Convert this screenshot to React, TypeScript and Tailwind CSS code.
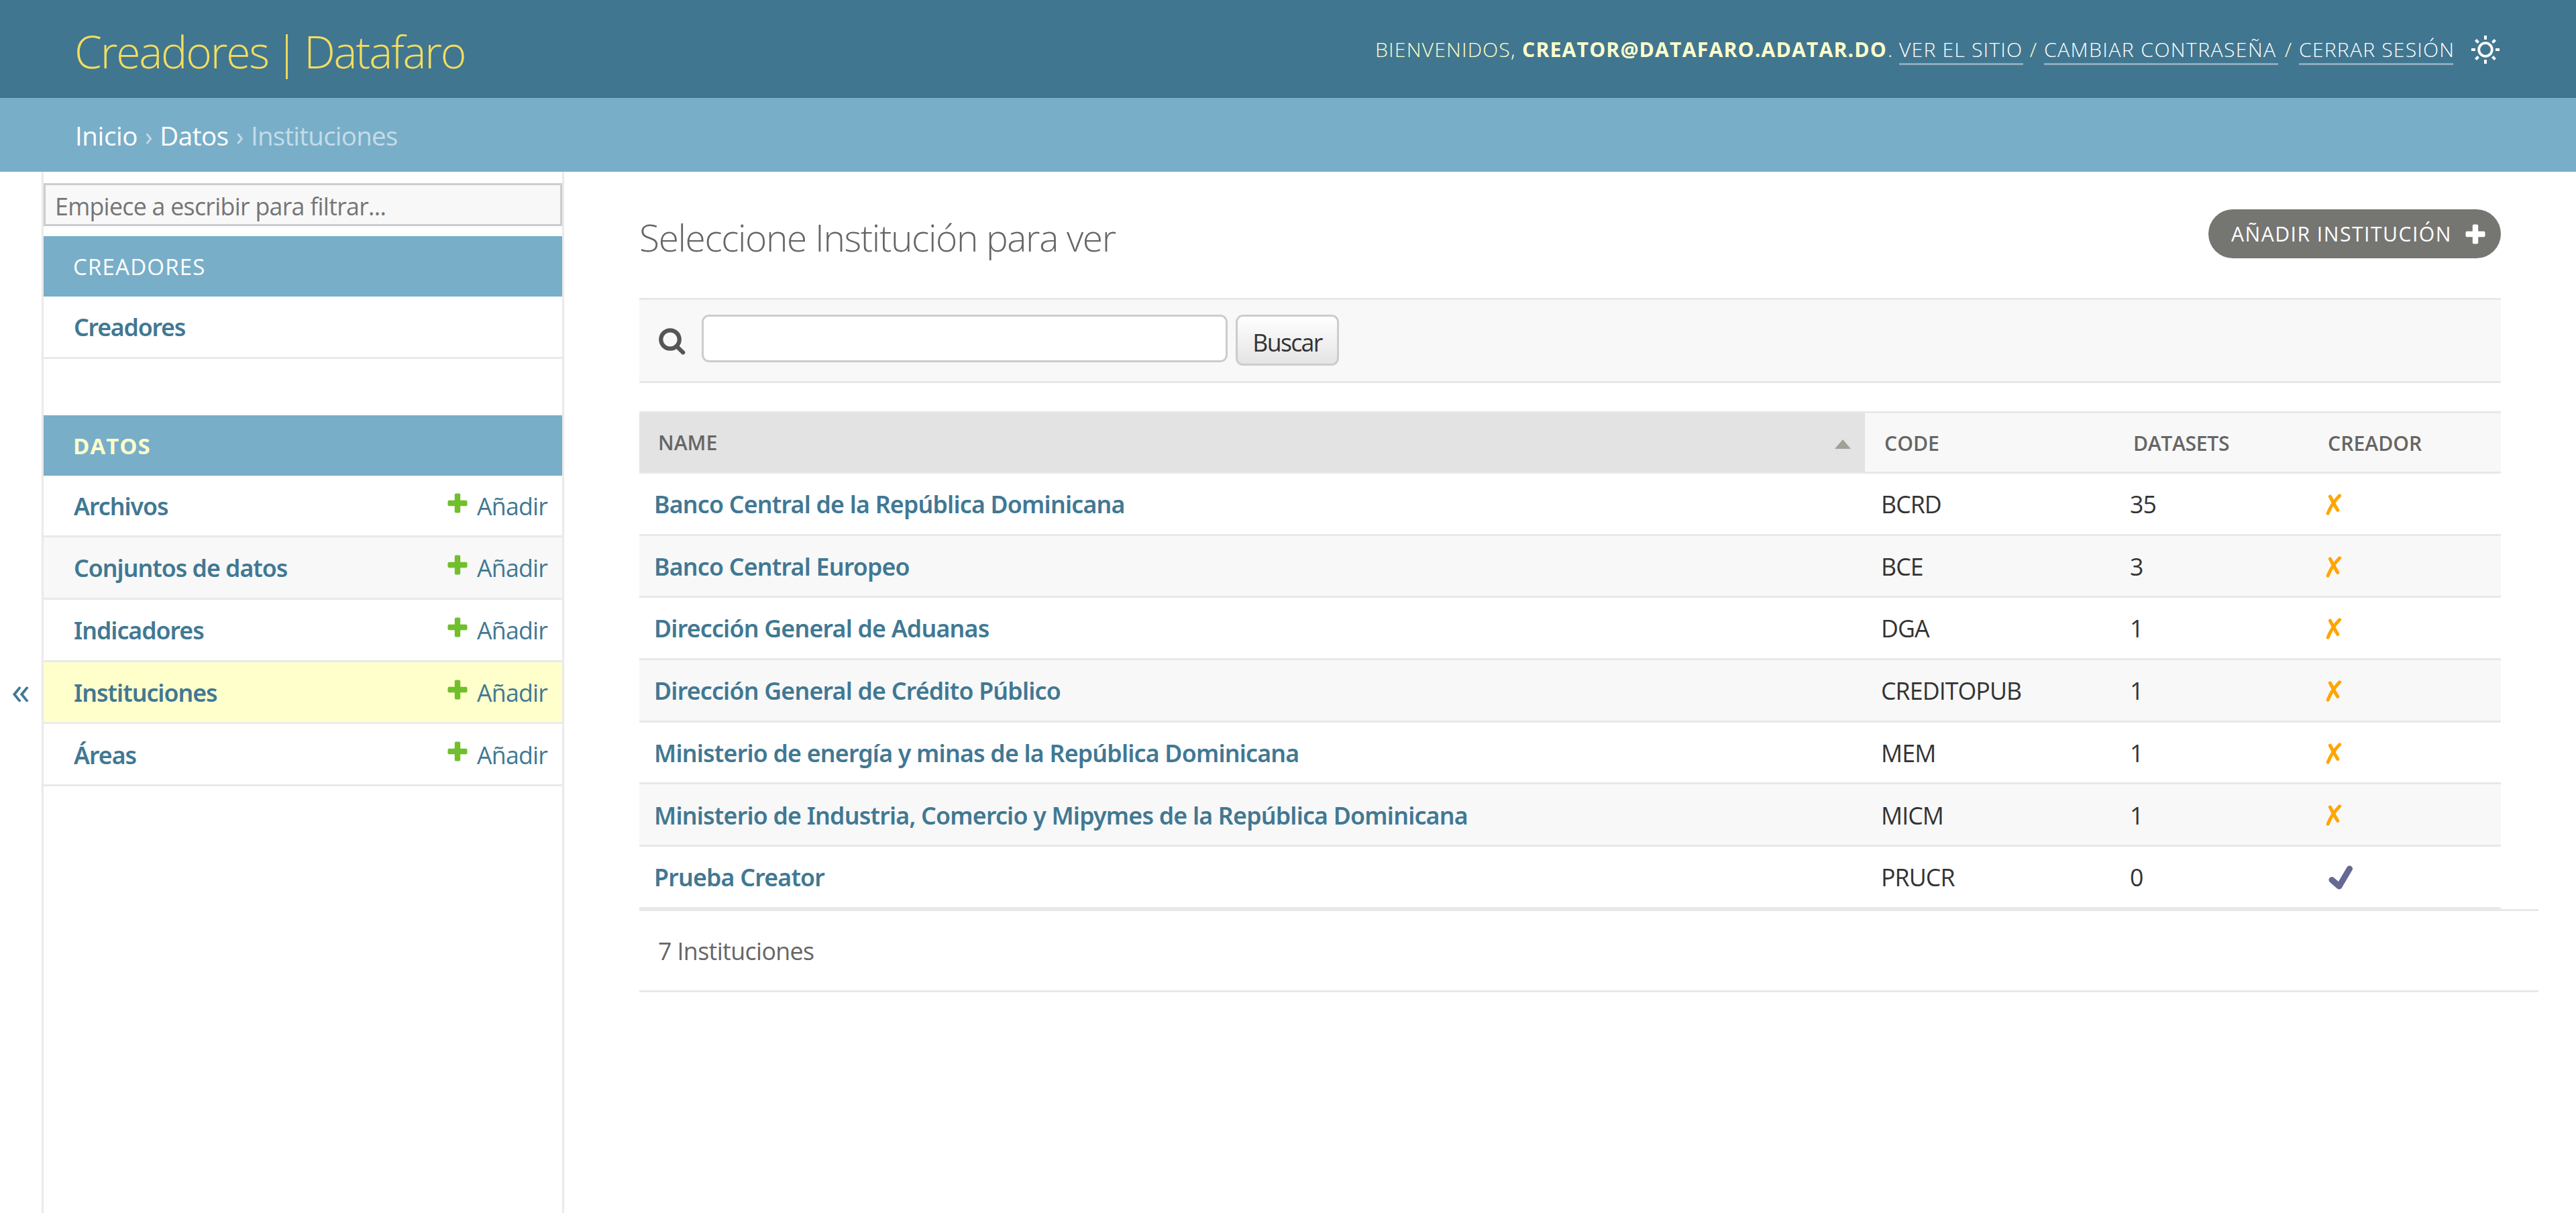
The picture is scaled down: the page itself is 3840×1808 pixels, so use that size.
type Model = { name: string; current?: boolean };

type Institution = {
  name: string;
  code: string;
  datasets: number;
  creator: boolean;
};

const models: Model[] = [
  { name: "Archivos" },
  { name: "Conjuntos de datos" },
  { name: "Indicadores" },
  { name: "Instituciones", current: true },
  { name: "Áreas" },
];

const institutions: Institution[] = [
  { name: "Banco Central de la República Dominicana", code: "BCRD", datasets: 35, creator: false },
  { name: "Banco Central Europeo", code: "BCE", datasets: 3, creator: false },
  { name: "Dirección General de Aduanas", code: "DGA", datasets: 1, creator: false },
  { name: "Dirección General de Crédito Público", code: "CREDITOPUB", datasets: 1, creator: false },
  { name: "Ministerio de energía y minas de la República Dominicana", code: "MEM", datasets: 1, creator: false },
  { name: "Ministerio de Industria, Comercio y Mipymes de la República Dominicana", code: "MICM", datasets: 1, creator: false },
  { name: "Prueba Creator", code: "PRUCR", datasets: 0, creator: true },
];

function SunIcon() {
  return (
    <svg viewBox="-21 -21 42 42" className="ml-[27px] size-[42px] shrink-0" fill="none" stroke="#fff">
      <circle r="9.8" strokeWidth="3.8" />
      {[0, 45, 90, 135, 180, 225, 270, 315].map((angle) => (
        <path key={angle} d={angle % 90 === 0 ? "M0 -21V-15" : "M0 -20.5V-14.8"} strokeWidth="4" transform={`rotate(${angle})`} />
      ))}
    </svg>
  );
}

function PlusIcon({ className }: { className: string }) {
  return (
    <svg viewBox="0 0 30 30" className={className} fill="currentColor">
      <rect x="10.8" y="0.5" width="8.4" height="29" rx="2" />
      <rect x="0.5" y="10.8" width="29" height="8.4" rx="2" />
    </svg>
  );
}

function SearchIcon() {
  return (
    <svg viewBox="0 0 40 40" className="mt-[42px] size-10 shrink-0" fill="none" stroke="#555">
      <circle cx="17" cy="17" r="13.7" strokeWidth="6.2" />
      <path d="M27 27.5L36.3 36.5" strokeWidth="6" strokeLinecap="round" />
    </svg>
  );
}

function NoIcon() {
  return (
    <svg viewBox="0 0 24 32" className="-ml-[3px] h-8 w-6" fill="none" stroke="#ffa500" strokeWidth="5" strokeLinecap="round">
      <path d="M20.6 2.8C14 9.5 7 19 3.2 29.2" />
      <path d="M6.4 4C10 11 14 18.5 17.8 24.4" />
    </svg>
  );
}

function YesIcon() {
  return (
    <svg viewBox="0 0 36 36" className="ml-px size-9" fill="none" stroke="#666993" strokeLinecap="round" strokeLinejoin="round">
      <path d="M5 21.5L16 31L31.5 4.8" strokeWidth="9" />
    </svg>
  );
}

function Header() {
  return (
    <header className="flex h-[146px] items-center justify-between bg-[#417690] pl-[111px] pr-[114px]">
      <h1 className="pt-1.5 text-[66px] font-light tracking-[-2.2px] text-[#f5dd5d] [word-spacing:-5px]">Creadores | Datafaro</h1>
      <div className="flex items-center whitespace-nowrap pt-0.5 text-[30.2px] font-light leading-[50px] tracking-[1.15px] text-[#ffffcc]">
        <span className="w-[219px]">BIENVENIDOS,</span>
        <strong className="w-[545px] font-bold">CREATOR@DATAFARO.ADATAR.DO</strong>
        <span className="w-[17px]">.</span>
        <UserLink className="w-[185px]">VER EL SITIO</UserLink>
        <span className="w-[31px] text-center">/</span>
        <UserLink className="w-[349px] tracking-[1.37px]">CAMBIAR CONTRASEÑA</UserLink>
        <span className="w-[31px] text-center">/</span>
        <UserLink className="w-[230px]">CERRAR SESIÓN</UserLink>
        <SunIcon />
      </div>
    </header>
  );
}

function UserLink({ className, children }: { className: string; children: string }) {
  return (
    <a href="#" className={`h-[46px] border-b-3 border-white/40 leading-[46px] text-white ${className}`}>
      {children}
    </a>
  );
}

function Breadcrumbs() {
  return (
    <nav className="flex h-[110px] items-center gap-[11px] bg-[#79aec8] pl-[112px] pt-1 text-[38.5px] tracking-[-0.4px] text-white">
      <a href="#">Inicio</a>
      <span className="text-[#c4dce8]">›</span>
      <a href="#">Datos</a>
      <span className="text-[#c4dce8]">›</span>
      <span className="tracking-[-0.75px] text-[#c4dce8]">Instituciones</span>
    </nav>
  );
}

function Sidebar() {
  return (
    <aside className="w-[779px] shrink-0 border-x-3 border-[#eaeaea] pt-[17px]">
      <input
        type="search"
        placeholder="Empiece a escribir para filtrar..."
        className="block h-16 w-full border-3 border-[#ccc] bg-[#f8f8f8] px-[14px] pt-1 text-[35.7px] tracking-[-0.7px] outline-none placeholder:text-[#757575]"
      />

      <div className="mt-[15px]">
        <h2 className="flex h-[90px] items-center bg-[#79aec8] pl-11 pt-0.5 text-[33px] tracking-[1.2px] text-white">CREADORES</h2>
        <div className="flex h-[92.7px] items-center border-b-3 border-[#eaeaea] pl-[45px] pt-0.5 font-['Noto_Sans'] text-[35.7px] font-semibold tracking-[-1.2px] text-[#417893]">
          Creadores
        </div>
      </div>

      <div className="mt-[84px]">
        <h2 className="flex h-[90px] items-center bg-[#79aec8] pl-11 pt-0.5 text-[33px] font-bold tracking-[1px] text-[#ffffcc]">DATOS</h2>
        {models.map((model, i) => (
          <div
            key={model.name}
            className={`flex h-[92.7px] items-center border-b-3 border-[#eaeaea] pl-[45px] pr-[22px] pt-0.5 text-[35.7px] text-[#417893] ${
              model.current ? "bg-[#ffffcc]" : i % 2 ? "bg-[#f8f8f8]" : "bg-white"
            }`}
          >
            <a href="#" className="flex-1 font-['Noto_Sans'] font-semibold tracking-[-1px]">{model.name}</a>
            <PlusIcon className="mb-[10px] mr-[14px] size-[30px] text-[#70bf2b]" />
            <a href="#" className="tracking-[-0.8px]">Añadir</a>
          </div>
        ))}
      </div>
    </aside>
  );
}

function SearchBar() {
  return (
    <form className="flex h-[127px] items-start border-y-3 border-[#e8e8e8] bg-[#f8f8f8] pl-[29px]">
      <SearchIcon />
      <input type="text" className="ml-6 mt-[22px] h-[71px] w-[784px] rounded-[11px] border-3 border-[#ccc] bg-white outline-none" />
      <button
        type="button"
        className="ml-3 mt-[22px] h-[76px] w-[154px] rounded-[11px] border-3 border-[#ccc] bg-linear-to-b from-white to-[#e4e4e4] pt-1.5 text-[35.7px] leading-[64px] tracking-[-1.7px] text-[#333]"
      >
        Buscar
      </button>
    </form>
  );
}

function ResultsTable() {
  return (
    <div className="mt-[42px]">
      <div className="flex h-[93px] items-stretch border-y-3 border-[#e8e8e8] bg-[#f8f8f8] text-[30.2px] font-semibold leading-[89px] text-[#666]">
        <div className="flex w-[1827px] items-center justify-between bg-[#e3e3e3] pl-7 pr-[21px]">
          NAME
          <svg viewBox="0 0 24 14" className="mt-1 h-3.5 w-6" fill="#a0a098">
            <path d="M12 0L24 14H0Z" />
          </svg>
        </div>
        <div className="w-[371px] pl-[29px]">CODE</div>
        <div className="w-[289px] pl-[29px] tracking-[-0.37px]">DATASETS</div>
        <div className="flex-1 pl-[30px]">CREADOR</div>
      </div>
      {institutions.map((item, i) => (
        <div
          key={item.code}
          className={`flex h-[92.7px] items-center border-b-3 border-[#e8e8e8] pt-0.5 text-[35.7px] text-[#333] ${i % 2 ? "bg-[#f8f8f8]" : "bg-white"}`}
        >
          <a href="#" className="w-[1827px] pl-[22px] font-['Noto_Sans'] font-semibold tracking-[-0.77px] text-[#417893]">{item.name}</a>
          <span className="w-[371px] pl-6 tracking-[-0.9px]">{item.code}</span>
          <span className="w-[289px] pl-6 tracking-[-0.9px]">{item.datasets}</span>
          <span className="flex-1 pl-[30px]">{item.creator ? <YesIcon /> : <NoIcon />}</span>
        </div>
      ))}
      <div className="-mr-14 flex h-[124px] items-center border-y-3 border-[#e8e8e8] pl-7 pt-0.5 text-[35.7px] tracking-[-0.6px] text-[#666]">
        7 Instituciones
      </div>
    </div>
  );
}

export default function App() {
  return (
    <div className="flex h-[1808px] w-[3840px] flex-col overflow-hidden bg-white font-['Open_Sans',sans-serif]">
      <Header />
      <Breadcrumbs />
      <div className="flex flex-1">
        <button type="button" className="w-[62px] pb-2 text-[56px] font-medium text-[#417893]">«</button>
        <Sidebar />
        <main className="flex-1 pl-28 pr-28 pt-14">
          <div className="flex h-[132px] items-start justify-between">
            <h2 className="pt-1 text-[55px] font-light leading-[76px] tracking-[-1.35px] text-[#666]">Seleccione Institución para ver</h2>
            <a href="#" className="flex h-[73px] w-[436px] items-center rounded-full bg-[#757572] pl-[34px] text-[30.2px] tracking-[1.45px] text-white">
              <span className="w-[349px]">AÑADIR INSTITUCIÓN</span>
              <PlusIcon className="size-[30px]" />
            </a>
          </div>
          <SearchBar />
          <ResultsTable />
        </main>
      </div>
    </div>
  );
}
